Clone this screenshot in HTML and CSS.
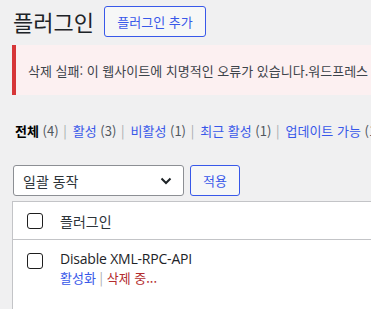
FILE: index.html
```html
<!DOCTYPE html>
<html lang="ko">
<head>
<meta charset="utf-8">
<link rel="stylesheet" href="styles.css">
</head>
<body>
<div class="wrap">
  <div class="head">
    <h1 class="title">플러그인</h1>
    <a class="add-btn">플러그인 추가</a>
  </div>
  <div class="notice"><p>삭제 실패: 이 웹사이트에 치명적인 오류가 있습니다.워드프레스 관리자 이메일 받은편지함에서 지침을 확인하세요.</p></div>
  <ul class="subsub">
    <li><b class="cur">전체</b> <span class="cnt">(4)</span> <span class="sep">|</span></li>
    <li><a>활성</a> <span class="cnt">(3)</span> <span class="sep">|</span></li>
    <li><a>비활성</a> <span class="cnt">(1)</span> <span class="sep">|</span></li>
    <li><a>최근 활성</a> <span class="cnt">(1)</span> <span class="sep">|</span></li>
    <li><a>업데이트 가능</a> <span class="cnt">(1)</span></li>
  </ul>
  <div class="bulk">
    <div class="select">
      <span>일괄 동작</span>
      <svg class="chev" width="12" height="8" viewBox="0 0 12 8"><path d="M1.5 1.5 L6 6 L10.5 1.5" fill="none" stroke="#1d2327" stroke-width="2"/></svg>
    </div>
    <a class="apply">적용</a>
  </div>
  <div class="table">
    <div class="row head-row">
      <span class="cb"></span>
      <span class="col-name">플러그인</span>
    </div>
    <div class="row plugin-row">
      <span class="cb"></span>
      <div class="plugin">
        <div class="pname">Disable XML-RPC-API</div>
        <div class="actions"><a>활성화</a> <span class="sep2">|</span> <span class="del">삭제 중...</span></div>
      </div>
    </div>
  </div>
</div>
</body>
</html>
```
FILE: styles.css
```css
html, body {
  margin: 0;
  padding: 0;
  background: #f0f0f1;
  overflow: hidden;
}
body {
  font-family: "Noto Sans CJK KR", "Noto Sans", sans-serif;
  color: #3c434a;
  width: 371px;
  height: 309px;
}
.wrap {
  width: 700px;
  padding-left: 12px;
}
.head {
  display: flex;
  align-items: center;
  height: 31px;
  margin-top: 6px;
}
.title {
  margin: 0 10px 0 1px;
  font-size: 22px;
  font-weight: 400;
  color: #1d2327;
  line-height: 31px;
}
.add-btn {
  box-sizing: border-box;
  height: 31px;
  width: 102px;
  border: 1px solid #3858e9;
  border-radius: 3px;
  background: #f6f7f7;
  color: #3858e9;
  font-size: 13px;
  display: flex;
  align-items: center;
  justify-content: center;
}
.notice {
  margin-top: 8px;
  height: 50px;
  box-sizing: border-box;
  border-left: 4px solid #d63638;
  background: #fcf0f1;
  display: flex;
  align-items: center;
  padding-left: 12px;
}
.notice p {
  margin: 0;
  font-size: 13px;
  white-space: nowrap;
  color: #3c434a;
}
.subsub {
  list-style: none;
  margin: 26px 0 0 3px;
  padding: 0;
  display: flex;
  white-space: nowrap;
  font-size: 13px;
  line-height: 20px;
}
.subsub li {
  margin-right: 6px;
}
.subsub a {
  color: #3858e9;
}
.cur {
  color: #000;
}
.cnt {
  color: #50575e;
}
.sep {
  color: #a7aaad;
  margin-left: 1px;
}
.bulk {
  display: flex;
  gap: 6px;
  margin-top: 24px;
  margin-left: 1px;
}
.select {
  box-sizing: border-box;
  width: 171px;
  height: 31px;
  border: 1px solid #8c8f94;
  border-radius: 3px;
  background: #fff;
  display: flex;
  align-items: center;
  justify-content: space-between;
  padding: 0 11px 0 9px;
  font-size: 14px;
  color: #2c3338;
}
.apply {
  box-sizing: border-box;
  width: 50px;
  height: 31px;
  border: 1px solid #3858e9;
  border-radius: 3px;
  background: #f6f7f7;
  color: #3858e9;
  font-size: 13px;
  display: flex;
  align-items: center;
  justify-content: center;
}
.table {
  margin-top: 5px;
  border: 1px solid #c3c4c7;
  background: #fff;
  height: 200px;
}
.row {
  display: flex;
  padding-left: 14px;
}
.head-row {
  height: 37px;
  align-items: center;
  border-bottom: 1px solid #c3c4c7;
}
.cb {
  box-sizing: border-box;
  width: 16px;
  height: 16px;
  border: 1px solid #1e1e1e;
  border-radius: 3px;
  background: #fff;
  flex: none;
}
.col-name {
  margin-left: 17px;
  font-size: 14px;
  color: #2c3338;
}
.plugin-row {
  padding-top: 13px;
}
.plugin {
  margin-left: 17px;
  margin-top: -4px;
}
.pname {
  font-family: "Open Sans", "Noto Sans", sans-serif;
  font-size: 14px;
  color: #1d2327;
  line-height: 20px;
  letter-spacing: -0.2px;
}
.actions {
  font-size: 13px;
  line-height: 18px;
}
.actions a {
  color: #3858e9;
}
.sep2 {
  color: #a7aaad;
}
.del {
  color: #b32d2e;
}
```
